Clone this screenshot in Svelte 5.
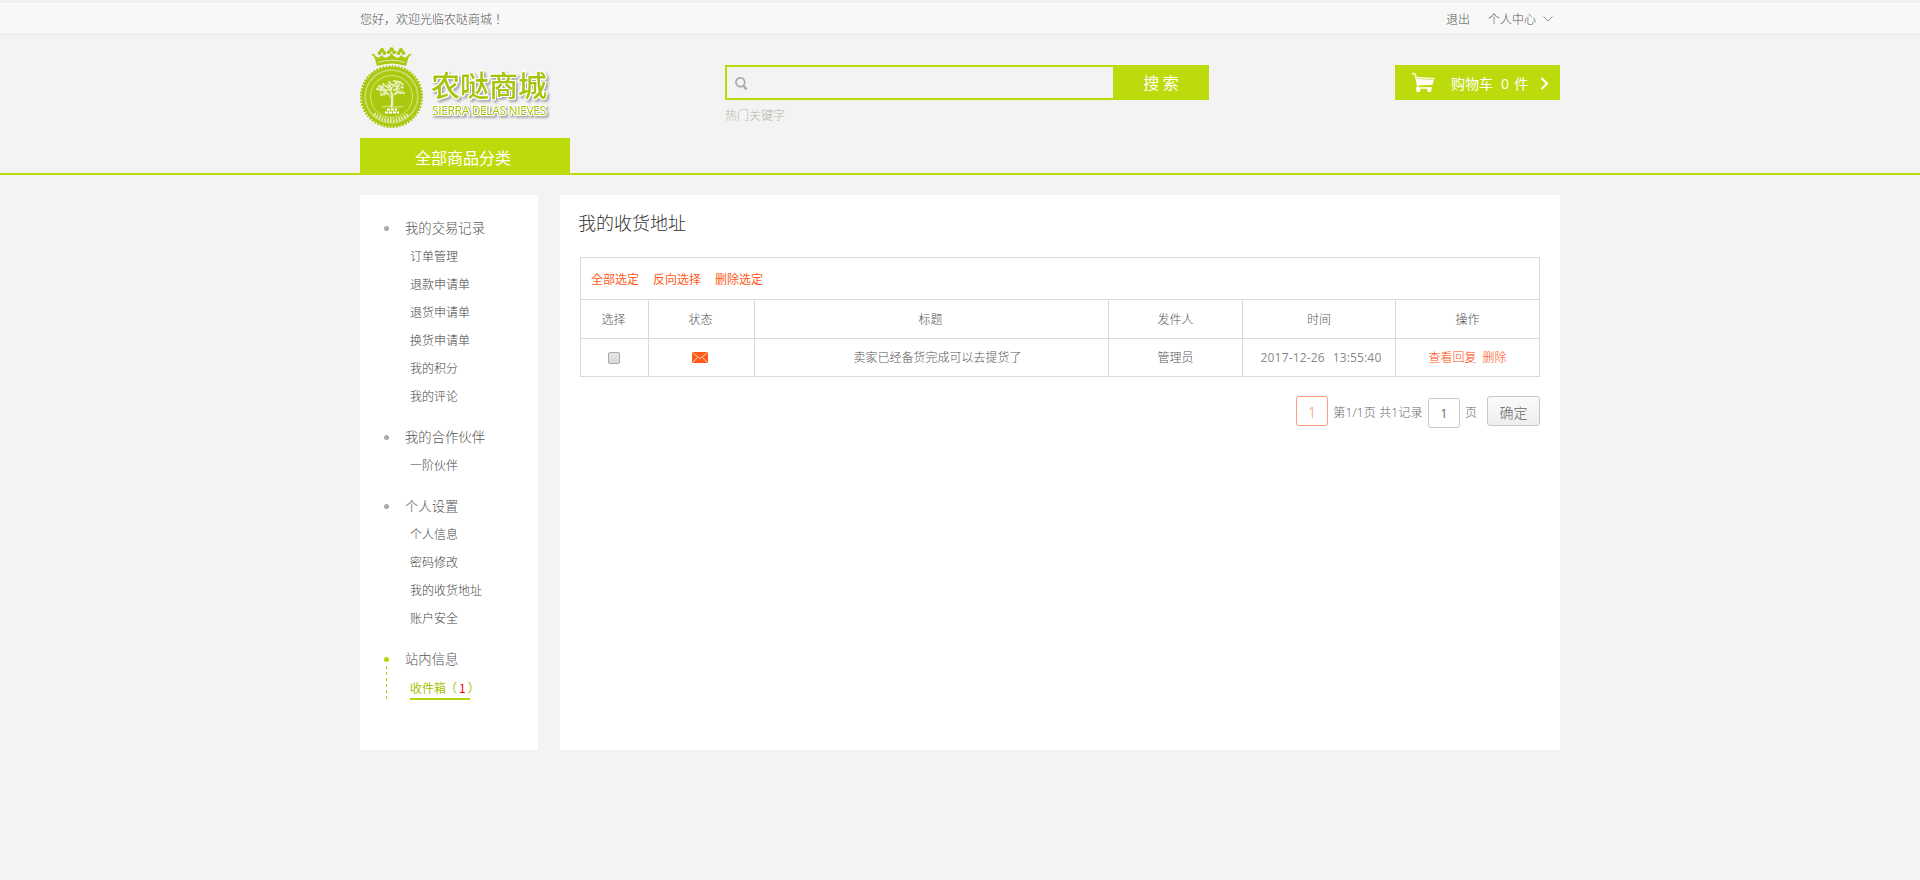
<script>
  const groups = [
    { title: '我的交易记录', items: ['订单管理', '退款申请单', '退货申请单', '换货申请单', '我的积分', '我的评论'] },
    { title: '我的合作伙伴', items: ['一阶伙伴'] },
    { title: '个人设置', items: ['个人信息', '密码修改', '我的收货地址', '账户安全'] },
    { title: '站内信息', items: [], inbox: 1 }
  ];
  const columns = ['选择', '状态', '标题', '发件人', '时间', '操作'];
  const messages = [
    { title: '卖家已经备货完成可以去提货了', from: '管理员', date: '2017-12-26', time: '13:55:40' }
  ];
</script>

<div class="page">
  <div class="topbar">
    <div class="wrap topin">
      <span class="hello">您好，欢迎光临农哒商城<em>！</em></span>
      <span class="links">
        <span>退出</span>
        <span class="center">个人中心
          <svg width="10" height="6" viewBox="0 0 10 6"><path d="M.6.5 5 5 9.4.5" fill="none" stroke="#888" stroke-width=".9" /></svg>
        </span>
      </span>
    </div>
  </div>

  <header>
    <div class="wrap head">
      <div class="logo">
        <svg class="badge" width="64" height="82" viewBox="0 0 64 82">
          <g fill="#a9c80e">
            <path d="M17 19 14.500 10.500Q13 8 11 7.500Q14 6 16 9.500Q19 12 22 8Q24 12 27.500 10Q30 9 31.500 6Q33 9 35.500 10Q39 12 41 8Q44 12 47 9.500Q49 6 52 7.500Q50 8 48.500 10.500L46 19Q31.500 14 17 19Z" />
            <circle cx="22" cy="3.200" r="2.200" /><circle cx="19.500" cy="6" r="1.900" /><circle cx="24.500" cy="6" r="1.900" />
            <circle cx="31.500" cy="2.400" r="2.200" /><circle cx="28.800" cy="5.200" r="1.900" /><circle cx="34.200" cy="5.200" r="1.900" />
            <circle cx="41" cy="3.200" r="2.200" /><circle cx="38.500" cy="6" r="1.900" /><circle cx="43.500" cy="6" r="1.900" />
            <circle cx="31.500" cy="49.500" r="30" />
          </g>
          <circle cx="31.500" cy="49.500" r="30.300" fill="none" stroke="#a9c80e" stroke-width="2.600" stroke-dasharray="1.900 1.270" />
          <path d="M18 15.500Q31.500 11 45 15.500" fill="none" stroke="#eef3d0" stroke-width=".8" />
          <path d="M18 20.500Q31.500 17 45 20.500" fill="none" stroke="#f2f2f2" stroke-width="1.200" stroke-dasharray="2 1" />
          <circle cx="31.500" cy="49.500" r="26.300" fill="none" stroke="#c9dc68" stroke-width="1.800" />
          <circle cx="31.500" cy="49.500" r="21" fill="none" stroke="#dce99c" stroke-width=".9" />
          <g fill="none" stroke="#eaf2c4" stroke-linecap="round">
            <path d="M31.500 59.500Q33 54 31.500 46" stroke-width="2.400" />
            <path d="M31.500 51 26 46 20 46M27 46 24 41 17 41M31.500 50 31 40 27 37M31 43 35 36M32 50 37 44 43 44M36 45 39 39 40 35M39 42 43 39" stroke-width=".9" />
            <path d="M17 42l5 2M19 39l5 1M23 37l4 3M29 35l3 3M34 34l6 1M39 35l5 3M42 40l2 2M40 46l4 0M21 48l5-1M23 43l5 0M33 38l4 2M34 43l5-2M28 40l2 4M25 45l3 2M36 36l3 4M21 41l4 4M35 47l4-2M29 38l3 5" stroke-width="2" stroke-dasharray="1 2" />
            <path d="M22 60Q28 58.500 31 59.500T43 59.500" stroke-width=".8" />
          </g>
          <path d="M27 62.500h10M25 65.500h14" stroke="#fff" stroke-width="1.900" stroke-dasharray="3.200 .8" />
          <path d="M14 67Q31.500 80 49 67" fill="none" stroke="#e4eeae" stroke-width="3.800" stroke-dasharray="1.700 1.200" />
        </svg>
        <div class="brand">
          <div class="cn">农哒商城</div>
          <div class="en">SIERRA DELAS NIEVES</div>
        </div>
      </div>

      <div class="search">
        <div class="bar">
          <div class="field">
            <svg width="14" height="14" viewBox="0 0 14 14"><circle cx="5.300" cy="5.200" r="4.400" fill="none" stroke="#aaa" stroke-width="1.700" /><path d="m8.300 8.500 3.300 4" stroke="#aaa" stroke-width="2.300" /></svg>
          </div>
          <div class="go">搜 索</div>
        </div>
        <div class="hot">热门关键字</div>
      </div>

      <div class="cart">
        <svg width="24" height="21" viewBox="0 0 24 21">
          <path d="M1 1.300 4.300 2.200 7 15.300" fill="none" stroke="#fff" stroke-width="1.300" />
          <path d="M4.500 4.800 23.500 6 21.500 12.800 6.300 13.500Z" fill="#fff" />
          <path d="M5.500 6.500 22.300 7.500" stroke="#bddb0c" stroke-width=".7" />
          <path d="M5 16h16" stroke="#fff" stroke-width="1.600" />
          <circle cx="7.300" cy="18.200" r="2.100" fill="#fff" /><circle cx="18.300" cy="18.200" r="2.100" fill="#fff" />
        </svg>
        <span class="ct">购物车</span><span class="num">0 件</span>
        <svg class="arr" width="9" height="13" viewBox="0 0 9 13"><path d="m1.500 1 5.500 5.500-5.500 5.500" fill="none" stroke="#fff" stroke-width="2" /></svg>
      </div>
    </div>
    <div class="nav"><div class="wrap"><div class="all">全部商品分类</div></div></div>
  </header>

  <div class="wrap body">
    <aside>
      {#each groups as g}
        <section class:active={g.inbox}>
          <h3><i></i>{g.title}</h3>
          {#each g.items as item}<div class="item">{item}</div>{/each}
          {#if g.inbox}
            <div class="item inbox"><span class="dash"></span><span class="in">收件箱<em>（</em><b>{g.inbox}</b><em>）</em></span></div>
          {/if}
        </section>
      {/each}
    </aside>

    <main>
      <h2>我的收货地址</h2>
      <div class="table">
        <div class="tools"><span>全部选定</span><span>反向选择</span><span>删除选定</span></div>
        <div class="row hd">
          {#each columns as c}<div>{c}</div>{/each}
        </div>
        {#each messages as m}
          <div class="row">
            <div><span class="check"></span></div>
            <div class="state">
              <svg width="16" height="11" viewBox="0 0 16 11"><rect width="16" height="11" rx="1.200" fill="#ff5a1a" /><path d="M1 .8 7 6Q8 6.800 9 6L15 .8M1 10.300 5.500 5.500M15 10.300 10.500 5.500" fill="none" stroke="#ffe6db" stroke-width=".9" /></svg>
            </div>
            <div class="subject">{m.title}</div>
            <div class="from">{m.from}</div>
            <div class="when"><span>{m.date}</span><span>{m.time}</span></div>
            <div class="ops"><span>查看回复</span><span>删除</span></div>
          </div>
        {/each}
      </div>
      <div class="pager">
        <span class="cur">1</span>
        <span class="info">第1/1页 共1记录</span>
        <span class="box">1</span>
        <span class="pg">页</span>
        <span class="ok">确定</span>
      </div>
    </main>
  </div>
</div>

<style>
  :global(body) { background: #f3f3f3; }
  .page { min-height: 880px; background: #f3f3f3; font: 300 12px/20px "Open Sans", "Noto Sans CJK SC", sans-serif; color: #555; }
  .wrap { width: 1200px; margin: 0 auto; }
  .topbar { height: 35px; box-sizing: border-box; padding-top: 3px; background: linear-gradient(#f2f2f2 3px, #fff 3px, #fff 4px, #f8f8f8 4px); border-bottom: 1px solid #e8e8e8; }
  .topin { display: flex; justify-content: space-between; line-height: 31px; font-family: "Noto Sans CJK SC", sans-serif; }
  em { font-style: normal; display: inline-block; }
  .hello em { transform: translateX(3px); }
  .links { display: flex; gap: 18px; padding-right: 7px; }
  .center { display: flex; align-items: center; gap: 7px; }
  .head { height: 103px; display: flex; align-items: flex-start; }
  .logo { width: 365px; display: flex; padding-top: 12px; }
  .badge { display: block; }
  .brand { padding: 18px 0 0 7px; white-space: nowrap; color: #a5c50c; filter: drop-shadow(1px 0 0 #fff) drop-shadow(-1px 0 0 #fff) drop-shadow(0 1px 0 #fff) drop-shadow(0 -1px 0 #fff) drop-shadow(2px 2px 1px #aaa); }
  .cn { font: 500 29px/38px "Noto Sans CJK SC", sans-serif; }
  .en { font: 400 12px/16px "Open Sans", sans-serif; letter-spacing: -.35px; padding: 0 0 0 1px; }
  .search { width: 484px; padding-top: 30px; }
  .bar { display: flex; height: 35px; }
  .field { width: 388px; box-sizing: border-box; border: 2px solid #bddb0c; border-right: 0; padding: 10px 0 0 8px; }
  .field svg { display: block; }
  .go { flex: 1; background: #bddb0c; color: #fff; font: 400 16px/35px "Noto Sans CJK SC", sans-serif; text-align: center; }
  .hot { color: #b6b6aa; padding-top: 6px; }
  .cart { margin: 30px 0 0 auto; width: 165px; height: 35px; box-sizing: border-box; padding: 0 11px 0 16px; background: #bddb0c; color: #fff; display: flex; align-items: center; font-size: 14px; font-weight: 400; }
  .ct, .num { padding-top: 2px; }
  .ct { margin-left: 16px; }
  .num { margin-left: 8px; word-spacing: 1.5px; }
  .arr { margin-left: auto; margin-top: 2px; }
  .nav { height: 37px; box-sizing: border-box; border-bottom: 2px solid #bddb0c; }
  .all { width: 210px; height: 35px; box-sizing: border-box; padding-right: 4px; background: #bddb0c; color: #fff; text-align: center; font: 400 16px/38px "Noto Sans CJK SC", sans-serif; }
  .body { display: flex; justify-content: space-between; margin-top: 20px; }
  aside { width: 178px; height: 555px; box-sizing: border-box; background: #fff; padding: 19px 0 0 24px; display: flex; flex-direction: column; gap: 13px; }
  h3 { margin: 0; height: 28px; display: flex; align-items: center; font-size: 13.33px; font-weight: 300; color: #555; }
  h3 i { width: 5px; height: 5px; border-radius: 50%; background: #aaa; margin-right: 16px; }
  .item { height: 28px; line-height: 30px; padding-left: 26px; color: #444; }
  .active i { background: #b5d50b; }
  .inbox { display: flex; padding-left: 2px; color: #a2c400; font-weight: 400; }
  .dash { width: 1px; height: 35px; margin: -7px 23px 0 0; background: repeating-linear-gradient(#b5d50b 0 3px, transparent 3px 6px); }
  .in { width: 60px; height: 27px; box-sizing: border-box; border-bottom: 2px solid #b5d50b; white-space: nowrap; font-family: "Noto Sans CJK SC", sans-serif; }
  .in em { transform: translateX(-1px); }
  .in em:last-child { transform: translateX(1px); }
  .in b { color: #f00; font-weight: 400; padding: 0 1px; }
  main { width: 1000px; height: 555px; box-sizing: border-box; background: #fff; padding: 14px 20px 0; }
  h2 { margin: 0 0 0 -2px; font-size: 18px; line-height: 28px; font-weight: 300; color: #333; }
  .table { margin-top: 20px; border: 1px solid #dadada; }
  .tools { height: 41px; display: flex; align-items: center; gap: 14px; padding: 3px 0 0 10px; box-sizing: border-box; color: #ff5a1a; font-weight: 400; }
  .row { display: grid; grid-template-columns: 67px 106px 354px 134px 153px 144px; height: 38px; box-sizing: border-box; border-top: 1px solid #dadada; }
  .row.hd { height: 39px; }
  .row > div { display: flex; align-items: center; justify-content: center; padding: 1px 2px 0 0; }
  .row > div + div { border-left: 1px solid #dadada; }
  .row > div:nth-child(n + 4) { padding-right: 0; }
  .row .state { padding: 0 4px 0 0; }
  .check { width: 12px; height: 12px; box-sizing: border-box; border: 1px solid #aaa; border-radius: 2px; background: linear-gradient(#e8e8e8, #d8d8d8); }
  .row .subject { padding-left: 14px; }
  .row .when { gap: 8px; padding-left: 4px; color: #888; font-weight: 400; letter-spacing: .15px; }
  .row .ops { gap: 6px; color: #ff4a0a; }
  .pager { display: flex; justify-content: flex-end; height: 32px; margin-top: 19px; color: #666; }
  .pager span { box-sizing: border-box; text-align: center; }
  .pager .cur { width: 32px; height: 30px; border: 1px solid #ff9c7c; border-radius: 3px; color: #ff8c68; font-size: 15px; line-height: 30px; }
  .info { width: 100px; line-height: 34px; white-space: nowrap; letter-spacing: .15px; }
  .box { width: 32px; height: 30px; margin-top: 2px; border: 1px solid #c6c6c6; border-radius: 3px; line-height: 29px; font-weight: 400; }
  .pg { width: 22px; line-height: 34px; }
  .ok { width: 53px; height: 30px; margin-left: 5px; border: 1px solid #c6c6c6; border-radius: 3px; background: linear-gradient(#fafafa, #efefef); font-size: 14px; line-height: 31px; }
</style>
